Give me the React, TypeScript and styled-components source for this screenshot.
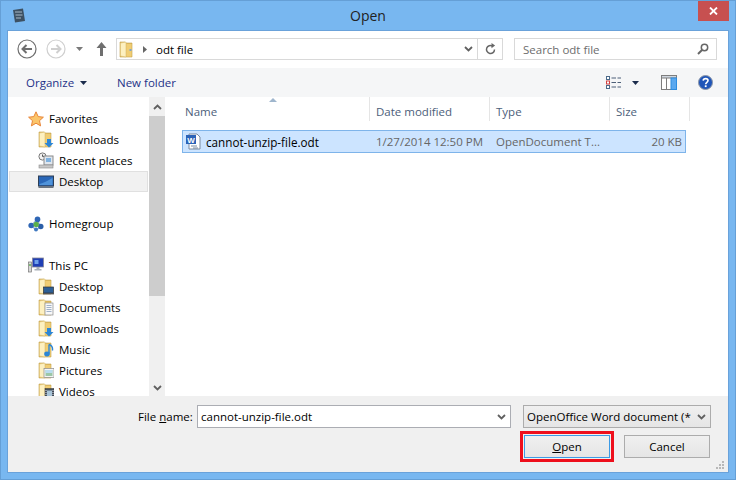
import React from "react";
import styled, { createGlobalStyle } from "styled-components";

const Global = createGlobalStyle`
  html, body { margin: 0; padding: 0; background: #78b7f0; }
  * { box-sizing: border-box; }
`;

const Win = styled.div`
  width: 736px; height: 480px; display: flex; flex-direction: column;
  background: #78b7f0; border: 1px solid #659fd6; overflow: hidden;
  font-family: "Open Sans", "Noto Sans", sans-serif; font-size: 12px; color: #000;
`;
const TitleBar = styled.div`
  height: 29px; flex: none; display: grid; grid-template-columns: 1fr auto 1fr; align-items: start;
`;
const TitleIcon = styled.div` padding: 7px 0 0 11px; display: flex; `;
const Title = styled.div` font-size: 14px; line-height: 29px; color: #222; `;
const CloseWrap = styled.div` display: flex; justify-content: flex-end; padding-right: 6px; `;
const Close = styled.div`
  width: 31px; height: 20px; background: #c75050; display: flex; align-items: center; justify-content: center;
`;
const Client = styled.div`
  flex: 1; margin: 0 6px 6px 6px; border: 1px solid #6aa2da; display: flex; flex-direction: column; background: #fff; min-height: 0;
`;
const AddressRow = styled.div`
  height: 37px; flex: none; display: flex; align-items: flex-start; padding: 7px 11px 0 9px; background: #fff;
`;
const NavCluster = styled.div` width: 99px; height: 22px; flex: none; display: flex; align-items: center; `;
const NavGap = styled.span<{ $w: number }>` width: ${p => p.$w}px; flex: none; `;
const AddressBox = styled.div`
  width: 387px; height: 22px; border: 1px solid #d9d9d9; display: flex; align-items: center; flex: none;
`;
const Crumb = styled.div` flex: 1; display: flex; align-items: center; padding-left: 2px; gap: 8px; font-size: 11.5px; `;
const CrumbText = styled.span` margin-left: 1px; `;
const AddrDrop = styled.div` width: 18px; display: flex; justify-content: center; `;
const Refresh = styled.div`
  width: 25px; height: 20px; border-left: 1px solid #d9d9d9; display: flex; align-items: center; justify-content: center;
`;
const Search = styled.div`
  margin-left: 11px; flex: 1; height: 22px; border: 1px solid #d9d9d9; display: flex; align-items: center;
  justify-content: space-between; padding: 0 7px 0 8px; color: #6d6d6d; font-size: 11.5px;
`;
const Toolbar = styled.div`
  height: 29px; flex: none; background: #f5f6f7; display: flex; align-items: center; padding: 0 15px 0 18px; color: #1e3287; font-size: 11.5px;
`;
const ToolItem = styled.div<{ $w?: number; $gap?: number }>`
  display: flex; align-items: center; gap: ${p => p.$gap ?? 6}px; ${p => (p.$w ? `width:${p.$w}px;` : "")}
`;
const Spacer = styled.div` flex: 1; `;
const Main = styled.div` flex: 1; display: flex; min-height: 0; background: #fff; `;
const Side = styled.div` width: 157px; flex: none; display: flex; `;
const NavPane = styled.div`
  width: 141px; padding-top: 11px; overflow: hidden; display: flex; flex-direction: column;
`;
const NavRow = styled.div<{ $child?: boolean }>`
  height: 21px; flex: none; display: flex; align-items: center; gap: 5px; font-size: 11.5px; white-space: nowrap;
  padding-left: ${p => (p.$child ? 30 : 20)}px;
`;
const SelectedRow = styled(NavRow)`
  margin-left: 1px; margin-right: 1px; padding-left: 28px; background: #f1f1f1; border: 1px solid #e0e0e0;
`;
const Blank = styled.div` height: 21px; flex: none; `;
const ScrollBar = styled.div`
  width: 16px; background: #f0f0f0; display: flex; flex-direction: column;
`;
const ScrollBtn = styled.div<{ $h: number }>`
  height: ${p => p.$h}px; flex: none; display: flex; align-items: center; justify-content: center;
`;
const Thumb = styled.div` height: 180px; flex: none; background: #cdcdcd; `;
const ScrollFill = styled.div` flex: 1; `;
const ListPane = styled.div` flex: 1; display: flex; flex-direction: column; padding-left: 17px; `;
const Header = styled.div`
  height: 33px; flex: none; display: grid; grid-template-columns: 188px 120px 120px 80px; color: #4c607a; font-size: 11.5px; position: relative;
`;
const HeadCell = styled.div`
  padding: 7px 0 0 6px; line-height: 16px; height: 24px; border-right: 1px solid #e5e5e5;
`;
const FirstHead = styled(HeadCell)` padding-left: 3px; `;
const SortArrow = styled.div`
  position: absolute; left: 87px; top: 1px; width: 0; height: 0;
  border-left: 4px solid transparent; border-right: 4px solid transparent; border-bottom: 4px solid #9fb6cd;
`;
const FileRow = styled.div`
  width: 504px; height: 23px; border: 1px solid #7eb4ea; background: #cce4ff; display: grid;
  grid-template-columns: 187px 120px 120px 1fr; align-items: center; color: #666; font-size: 11.5px;
`;
const NameCell = styled.div` display: flex; align-items: center; gap: 4px; padding-left: 2px; color: #000; font-size: 11.7px; `;
const FileCell = styled.div` padding-left: 6px; white-space: nowrap; `;
const SizeCell = styled.div` text-align: right; padding-right: 3px; `;
const Footer = styled.div`
  height: 76px; flex: none; background: #f0f0f0; padding: 9px 17px 0 130px; display: flex; flex-direction: column; position: relative;
`;
const FormLine = styled.div` display: flex; align-items: center; height: 23px; `;
const Label = styled.label` width: 59px; flex: none; font-size: 11.5px; `;
const U = styled.span` text-decoration: underline; `;
const NameInput = styled.div`
  width: 314px; flex: none; height: 23px; background: #fff; border: 1px solid #abadb3; display: flex; align-items: center; justify-content: space-between;
  padding: 0 4px 0 3px; font-size: 11.5px;
`;
const TypeSelect = styled.div`
  margin-left: 12px; width: 188px; flex: none; height: 23px; border: 1px solid #acacac; background: linear-gradient(#f0f0f0, #e5e5e5);
  display: flex; align-items: center; justify-content: space-between; padding: 0 4px 0 3px; font-size: 11.5px; white-space: nowrap; overflow: hidden;
`;
const Buttons = styled.div` display: flex; gap: 14px; justify-content: flex-end; margin-top: 7px; padding-right: 1px; `;
const Btn = styled.button<{ $primary?: boolean }>`
  width: 86px; height: 23px; padding: 0; font: inherit; font-size: 11.5px; color: #000;
  background: linear-gradient(#f0f0f0, #e5e5e5); border: 1px solid ${p => (p.$primary ? "#3c9be6" : "#acacac")};
  ${p => (p.$primary ? "outline: 3px solid #ee0f1c; outline-offset: 1px;" : "")}
`;
const Grip = styled.div` position: absolute; right: 3px; bottom: 2px; display: flex; `;

const Caret = ({ c = "#444", w = 7 }: { c?: string; w?: number }) => (
  <svg width={w} height={4} viewBox="0 0 7 4"><path d="M0 0h7L3.5 4z" fill={c} /></svg>
);
const Chevron = ({ up, c = "#606060" }: { up?: boolean; c?: string }) => (
  <svg width="9" height="6" viewBox="0 0 9 6">
    <path d={up ? "M1 5l3.5-3.5L8 5" : "M1 1l3.5 3.5L8 1"} fill="none" stroke={c} strokeWidth="1.8" />
  </svg>
);
const NavCircle = ({ dir, on }: { dir: "l" | "r"; on: boolean }) => {
  const c = on ? "#6f6f6f" : "#cfcfcf";
  return (
    <svg width="20" height="20" viewBox="0 0 20 20">
      <circle cx="10" cy="10" r="9" fill="#fff" stroke={c} strokeWidth="1.2" />
      <path d={dir === "l" ? "M15 10H6M9.5 6L5.5 10l4 4" : "M5 10h9M10.5 6l4 4-4 4"} fill="none" stroke={c} strokeWidth="2" />
    </svg>
  );
};
type Over = "none" | "down" | "desk" | "doc" | "music" | "pic" | "vid";
const Folder = ({ over = "none" }: { over?: Over }) => (
  <svg width="16" height="17" viewBox="0 0 16 17">
    <path d="M1 1h5l1 1h6v14H1z" fill="#e2bd62" stroke="#c5a24d" strokeWidth=".6" />
    <path d="M1.5 2L7 1v15l-5.5-1z" fill="#fdf0c0" stroke="#dcc076" strokeWidth=".6" />
    <rect x="7.5" y="3" width="5" height="12.5" fill="#f0cd74" />
    {over === "none" && <rect x="10.5" y="8" width="2" height="2" fill="#7fa7c9" />}
    {over === "down" && <path d="M9 8h4v4h2.5l-4.5 4.5L6.5 12H9z" fill="#2c86d6" />}
    {over === "desk" && <g><rect x="5.5" y="9" width="10" height="6" fill="#2d5f96" stroke="#333" strokeWidth=".7" /><rect x="5" y="15" width="11" height="1.4" fill="#555" /></g>}
    {over === "doc" && <g><rect x="7" y="4" width="8" height="12" fill="#f8f8f8" stroke="#8a8a8a" strokeWidth=".7" /><path d="M8.5 6.5h5M8.5 8.5h5M8.5 10.5h5M8.5 12.5h5" stroke="#8aa0bc" strokeWidth=".8" /></g>}
    {over === "music" && <g><path d="M11 3.5v9" stroke="#2c86d6" strokeWidth="1.4" /><ellipse cx="9" cy="13" rx="2.8" ry="2.4" fill="#2c86d6" /><path d="M11 3.5c3 1 4 3 3.4 6" stroke="#2c86d6" strokeWidth="1.4" fill="none" /></g>}
    {over === "pic" && <g><rect x="6" y="6.5" width="10" height="9" fill="#f5f5f5" stroke="#8a8a8a" strokeWidth=".7" /><rect x="7.5" y="8" width="7" height="6" fill="#9cc7a8" /><rect x="7.5" y="8" width="7" height="3" fill="#b9dcf0" /></g>}
    {over === "vid" && <g><rect x="7" y="5.5" width="9" height="10" fill="#44505c" stroke="#333" strokeWidth=".5" /><rect x="9" y="7.5" width="5" height="6" fill="#a8c4d8" /><path d="M8 7v8M15 7v8" stroke="#dde" strokeWidth="1" strokeDasharray="1 1" /></g>}
  </svg>
);
const Star = () => (
  <svg width="16" height="16" viewBox="0 0 16 16">
    <path d="M8 .8l2.2 4.8 5.2.6-3.9 3.5 1.1 5.2L8 12.2l-4.6 2.7 1.1-5.2L.6 6.2l5.2-.6z" fill="#fbc56a" stroke="#e8863a" strokeWidth="1" />
  </svg>
);
const Recent = () => (
  <svg width="16" height="17" viewBox="0 0 16 17">
    <circle cx="4.5" cy="4.5" r="3.6" fill="#f2f2f2" stroke="#777" />
    <path d="M4.5 2.5v2h2" stroke="#555" fill="none" />
    <rect x="6" y="4" width="9" height="9" fill="#dfe6ee" stroke="#8a8a8a" />
    <rect x="8" y="6" width="5" height="4" fill="#7fb2e0" />
    <rect x="1" y="13" width="14" height="3" fill="#c8c8c8" stroke="#8a8a8a" strokeWidth=".6" />
  </svg>
);
const Desktop = () => (
  <svg width="16" height="17" viewBox="0 0 16 17">
    <rect x="0.5" y="3" width="15" height="10" fill="#2a67b8" stroke="#2e3f55" />
    <path d="M1.5 11c4-1 8-3 13-6v7h-13z" fill="#4f93da" />
    <rect x="0.5" y="13" width="15" height="2" fill="#6a7480" />
  </svg>
);
const Homegroup = () => (
  <svg width="16" height="16" viewBox="0 0 16 16">
    <path d="M9 3.5L3.5 9.5 8 14l4.5-3z" fill="none" stroke="#9cb9dd" strokeWidth="1.6" />
    <circle cx="9.5" cy="3.4" r="2.8" fill="#2f66b5" />
    <circle cx="3.2" cy="9.5" r="2.8" fill="#2f66b5" />
    <circle cx="12.8" cy="10.5" r="2.7" fill="#2b5fa8" />
    <circle cx="8.2" cy="8.5" r="2.7" fill="#5ab04a" />
    <circle cx="8" cy="13.4" r="2" fill="#3f78c0" />
  </svg>
);
const ThisPC = () => (
  <svg width="16" height="17" viewBox="0 0 16 17">
    <rect x="0.5" y="5" width="3" height="10" fill="#d8d8d8" stroke="#777" strokeWidth=".7" />
    <rect x="1.3" y="7" width="1.4" height="2" fill="#5ab04a" />
    <rect x="4.5" y="1" width="11" height="9" fill="#1f3fb5" stroke="#889" strokeWidth=".8" />
    <rect x="6.5" y="3" width="4" height="4" fill="#6fa0ea" />
    <path d="M8.5 10h3v2h2v1.5h-7V12h2z" fill="#a9b0b8" />
  </svg>
);
const WordFile = () => (
  <svg width="17" height="17" viewBox="0 0 17 17">
    <path d="M4 1h8l3 3v12H4z" fill="#fff" stroke="#7a8aa0" />
    <rect x="1" y="2" width="10" height="9" fill="#2b63b8" />
    <text x="2.2" y="9.5" fontSize="8" fontWeight="700" fill="#fff" fontFamily="Liberation Sans, sans-serif">W</text>
    <path d="M6 13h6M8 15h5" stroke="#7a8aa0" />
  </svg>
);
const TitleGlyph = () => (
  <svg width="14" height="15" viewBox="0 0 14 15">
    <path d="M1 2l10-1.5L13 13 3 14.5z" fill="#3d5163" />
    <path d="M3 4h7M3.5 7h7M4 10h5" stroke="#a9bac8" />
  </svg>
);
const ViewIcon = () => (
  <svg width="16" height="13" viewBox="0 0 16 13">
    <rect x=".5" y=".5" width="3" height="3" fill="#fff" stroke="#4c6a8a" />
    <rect x=".5" y="5" width="3" height="3" fill="#fff" stroke="#d14040" />
    <rect x=".5" y="9.5" width="3" height="3" fill="#fff" stroke="#4c6a8a" />
    <path d="M5.5 2H10M11.5 2H15M5.5 6.5H10M11.5 6.5H15M5.5 11H10M11.5 11H15" stroke="#4c5f78" />
  </svg>
);
const PaneIcon = () => (
  <svg width="16" height="15" viewBox="0 0 16 15">
    <rect x=".5" y=".5" width="15" height="14" fill="#fff" stroke="#7d7d7d" />
    <rect x=".5" y=".5" width="15" height="2.5" fill="#cfd6de" stroke="#7d7d7d" />
    <path d="M5.5 3v11" stroke="#7d7d7d" />
    <rect x="10" y="3" width="5.5" height="11.5" fill="#5aa8ef" stroke="#2d8ce0" />
  </svg>
);
const Help = () => (
  <svg width="15" height="15" viewBox="0 0 15 15">
    <circle cx="7.5" cy="7.5" r="7" fill="#1f55b8" stroke="#8d97a6" />
    <path d="M5.2 5.6C5.4 3 10 3 10 5.6c0 1.8-2.3 1.7-2.3 3.6" fill="none" stroke="#fff" strokeWidth="1.6" />
    <rect x="6.8" y="10.3" width="1.8" height="1.8" fill="#fff" />
  </svg>
);
const GripDots = () => (
  <svg width="9" height="9" viewBox="0 0 9 9" fill="#b8b8b8">
    <rect x="6" y="0" width="2" height="2" /><rect x="3" y="3" width="2" height="2" /><rect x="6" y="3" width="2" height="2" />
    <rect x="0" y="6" width="2" height="2" /><rect x="3" y="6" width="2" height="2" /><rect x="6" y="6" width="2" height="2" />
  </svg>
);

const favChildren: { n: string; i: React.ReactNode }[] = [
  { n: "Downloads", i: <Folder over="down" /> },
  { n: "Recent places", i: <Recent /> },
];
const pcChildren: { n: string; o: Over }[] = [
  { n: "Desktop", o: "desk" },
  { n: "Documents", o: "doc" },
  { n: "Downloads", o: "down" },
  { n: "Music", o: "music" },
  { n: "Pictures", o: "pic" },
  { n: "Videos", o: "vid" },
];

export default function App() {
  return (
    <>
      <Global />
      <Win>
        <TitleBar>
          <TitleIcon><TitleGlyph /></TitleIcon>
          <Title>Open</Title>
          <CloseWrap>
            <Close>
              <svg width="9" height="8" viewBox="0 0 9 8"><path d="M1 .5l7 7M8 .5l-7 7" stroke="#fff" strokeWidth="1.8" /></svg>
            </Close>
          </CloseWrap>
        </TitleBar>
        <Client>
          <AddressRow>
            <NavCluster>
              <NavCircle dir="l" on />
              <NavGap $w={9} />
              <NavCircle dir="r" on={false} />
              <NavGap $w={10} />
              <Caret c="#7a7a7a" />
              <NavGap $w={13} />
              <svg width="11" height="14" viewBox="0 0 11 14"><path d="M5.5 0L10.5 6H7v8H4V6H.5z" fill="#6f6f6f" /></svg>
            </NavCluster>
            <AddressBox>
              <Crumb>
                <Folder />
                <svg width="4" height="7" viewBox="0 0 4 7"><path d="M0 0l4 3.5L0 7z" fill="#666" /></svg>
                <CrumbText>odt file</CrumbText>
              </Crumb>
              <AddrDrop><Chevron /></AddrDrop>
              <Refresh>
                <svg width="11" height="12" viewBox="0 0 11 12">
                  <path d="M9.5 6.5A4 4 0 1 1 7.5 3" fill="none" stroke="#666" strokeWidth="1.5" />
                  <path d="M6.5 0v5.2l3.6-2.6z" fill="#666" />
                </svg>
              </Refresh>
            </AddressBox>
            <Search>
              <span>Search odt file</span>
              <svg width="12" height="12" viewBox="0 0 12 12">
                <circle cx="7.5" cy="4.5" r="3.2" fill="none" stroke="#666" strokeWidth="1.5" />
                <path d="M5 7l-4 4" stroke="#666" strokeWidth="2" />
              </svg>
            </Search>
          </AddressRow>
          <Toolbar>
            <ToolItem $w={91}>Organize <Caret c="#1b2c4c" /></ToolItem>
            <ToolItem>New folder</ToolItem>
            <Spacer />
            <ToolItem $w={55} $gap={10}><ViewIcon /><Caret c="#1b2c4c" /></ToolItem>
            <ToolItem $w={37}><PaneIcon /></ToolItem>
            <ToolItem><Help /></ToolItem>
          </Toolbar>
          <Main>
            <Side>
              <NavPane>
                <NavRow><Star />Favorites</NavRow>
                {favChildren.map(c => <NavRow $child key={c.n}>{c.i}{c.n}</NavRow>)}
                <SelectedRow><Desktop />Desktop</SelectedRow>
                <Blank />
                <NavRow><Homegroup />Homegroup</NavRow>
                <Blank />
                <NavRow><ThisPC />This PC</NavRow>
                {pcChildren.map(c => <NavRow $child key={c.n}><Folder over={c.o} />{c.n}</NavRow>)}
              </NavPane>
              <ScrollBar>
                <ScrollBtn $h={19}><Chevron up /></ScrollBtn>
                <Thumb />
                <ScrollFill />
                <ScrollBtn $h={17}><Chevron /></ScrollBtn>
              </ScrollBar>
            </Side>
            <ListPane>
              <Header>
                <SortArrow />
                <FirstHead>Name</FirstHead>
                <HeadCell>Date modified</HeadCell>
                <HeadCell>Type</HeadCell>
                <HeadCell>Size</HeadCell>
              </Header>
              <FileRow>
                <NameCell><WordFile />cannot-unzip-file.odt</NameCell>
                <FileCell>1/27/2014 12:50 PM</FileCell>
                <FileCell>OpenDocument T...</FileCell>
                <SizeCell>20 KB</SizeCell>
              </FileRow>
            </ListPane>
          </Main>
          <Footer>
            <FormLine>
              <Label>File <U>n</U>ame:</Label>
              <NameInput>
                cannot-unzip-file.odt
                <Chevron />
              </NameInput>
              <TypeSelect>
                OpenOffice Word document (*
                <Chevron />
              </TypeSelect>
            </FormLine>
            <Buttons>
              <Btn $primary><U>O</U>pen</Btn>
              <Btn>Cancel</Btn>
            </Buttons>
            <Grip><GripDots /></Grip>
          </Footer>
        </Client>
      </Win>
    </>
  );
}
